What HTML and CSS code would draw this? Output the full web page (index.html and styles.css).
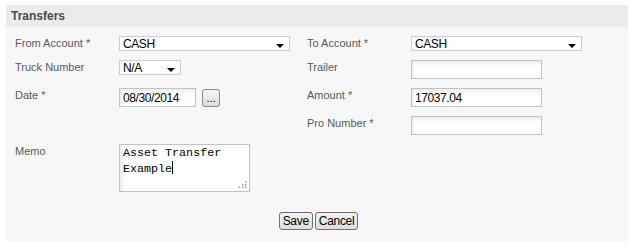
FILE: index.html
```html
<!DOCTYPE html>
<html lang="en">
<head>
  <meta charset="UTF-8">
  <meta name="viewport" content="width=device-width, initial-scale=1.0">
  <title>Transfers</title>
  <link rel="stylesheet" href="styles.css">
</head>
<body>
  <div class="panel">
    <div class="panel-title">Transfers</div>
    <div class="panel-body">
      <div class="form-grid">
        <div class="label">From Account *</div>
        <div class="field"><div class="select wide"><span>CASH</span><i class="arrow"></i></div></div>
        <div class="label">To Account *</div>
        <div class="field"><div class="select wide"><span>CASH</span><i class="arrow"></i></div></div>

        <div class="label">Truck Number</div>
        <div class="field"><div class="select small"><span>N/A</span><i class="arrow"></i></div></div>
        <div class="label">Trailer</div>
        <div class="field"><input type="text" class="text"></div>

        <div class="label">Date *</div>
        <div class="field date-field">
          <input type="text" class="text date" value="08/30/2014">
          <button type="button" class="pick">...</button>
        </div>
        <div class="label">Amount *</div>
        <div class="field"><input type="text" class="text" value="17037.04"></div>

        <div class="label"></div>
        <div class="field"></div>
        <div class="label">Pro Number *</div>
        <div class="field"><input type="text" class="text"></div>

        <div class="label">Memo</div>
        <div class="field">
          <div class="memo">Asset Transfer<br>Example<span class="caret"></span><i class="grip"></i></div>
        </div>
      </div>
      <div class="actions">
        <button type="button" class="btn">Save</button>
        <button type="button" class="btn">Cancel</button>
      </div>
    </div>
  </div>
</body>
</html>
```

FILE: styles.css
```css
body {
  margin: 0;
  background-color: #ffffff;
  font-family: "Liberation Sans", Arial, sans-serif;
  font-size: 11px;
}
.panel {
  margin: 5px 3px 0 6px;
  background-color: #f7f7f7;
}
.panel-title {
  height: 22px;
  line-height: 22px;
  padding-left: 5px;
  background-color: #ebebeb;
  color: #4b4b4b;
  font-weight: bold;
  font-size: 12px;
}
.panel-body {
  padding: 9px 0 11px 9px;
}
.form-grid {
  display: grid;
  grid-template-columns: 104px 188px 104px 1fr;
  row-gap: 9px;
  align-items: start;
}
.label {
  color: #595959;
  line-height: 14px;
}
.field {
  display: flex;
  align-items: center;
}
.select {
  box-sizing: border-box;
  height: 15px;
  display: flex;
  align-items: center;
  justify-content: space-between;
  padding: 0 5px 0 3px;
  background-color: #ffffff;
  border: 1px solid #c9ccd2;
  font-size: 12px;
  letter-spacing: -0.4px;
  color: #000000;
}
.select.wide {
  width: 171px;
}
.select.small {
  width: 62px;
}
.arrow {
  align-self: flex-end;
  margin-bottom: 2px;
  width: 0;
  height: 0;
  border-left: 4px solid transparent;
  border-right: 4px solid transparent;
  border-top: 4px solid #000000;
}
.text {
  box-sizing: border-box;
  width: 131px;
  height: 19px;
  margin: 0;
  padding: 0 3px;
  border: 1px solid #c3c3c3;
  background: linear-gradient(#ededed, #ffffff 5px);
  box-shadow: inset 2px 0 2px -1px #e6e6e6;
  font-family: "Liberation Sans", Arial, sans-serif;
  font-size: 12px;
  letter-spacing: -0.4px;
  color: #000000;
  outline: none;
}
.text.date {
  width: 77px;
}
.pick {
  box-sizing: border-box;
  width: 18px;
  height: 18px;
  margin-left: 6px;
  padding: 0;
  border: 1px solid #8a8a8a;
  border-radius: 3px;
  background: linear-gradient(#f6f6f6, #dcdcdc);
  font-family: "Liberation Sans", Arial, sans-serif;
  font-size: 11px;
  line-height: 14px;
  color: #000000;
}
.memo {
  position: relative;
  box-sizing: border-box;
  width: 131px;
  height: 48px;
  padding: 1px 3px;
  border: 1px solid #c3c3c3;
  background: linear-gradient(to right, #ececec, #ffffff 6px);
  font-family: "Liberation Mono", "Courier New", monospace;
  font-size: 11.7px;
  line-height: 15px;
  color: #000000;
}
.caret {
  display: inline-block;
  width: 1px;
  height: 13px;
  vertical-align: -2px;
  background-color: #000000;
}
.grip {
  position: absolute;
  right: 2px;
  bottom: 2px;
  width: 9px;
  height: 9px;
  background:
    radial-gradient(circle, #b8b8b8 1px, transparent 1px) 6px 0 / 3px 3px no-repeat,
    radial-gradient(circle, #b8b8b8 1px, transparent 1px) 3px 3px / 3px 3px no-repeat,
    radial-gradient(circle, #b8b8b8 1px, transparent 1px) 6px 3px / 3px 3px no-repeat,
    radial-gradient(circle, #b8b8b8 1px, transparent 1px) 0 6px / 3px 3px no-repeat,
    radial-gradient(circle, #b8b8b8 1px, transparent 1px) 3px 6px / 3px 3px no-repeat,
    radial-gradient(circle, #b8b8b8 1px, transparent 1px) 6px 6px / 3px 3px no-repeat;
}
.actions {
  display: flex;
  justify-content: center;
  gap: 2px;
  margin-top: 20px;
  padding-right: 6px;
}
.btn {
  box-sizing: border-box;
  height: 18px;
  padding: 0 3px;
  border: 1px solid #707070;
  border-radius: 3px;
  background: linear-gradient(#f4f4f4, #dedede);
  font-family: "Liberation Sans", Arial, sans-serif;
  font-size: 12px;
  letter-spacing: -0.3px;
  color: #000000;
}
```
